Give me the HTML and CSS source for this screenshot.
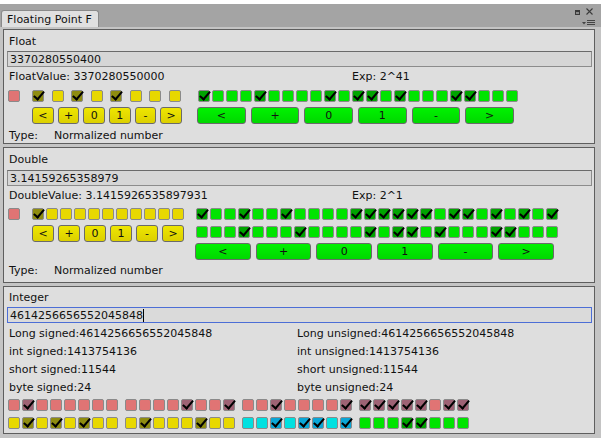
FILE: index.html
```html
<!DOCTYPE html>
<html>
<head>
<meta charset="utf-8">
<link rel="stylesheet" href="styles.css">
</head>
<body>
<div class="topstrip"></div>
<div class="tabbar">
  <div class="tab">Floating Point F</div>
  <svg class="winctl" width="26" height="23" viewBox="0 0 26 23">
    <rect x="2" y="6" width="5" height="5" fill="#3a3a3a"/>
    <rect x="3" y="8" width="3" height="2" fill="#8a8a8a"/>
    <path d="M13.5 4.5 L19.5 10.5 M19.5 4.5 L13.5 10.5" stroke="#3c3c3c" stroke-width="1.1" fill="none"/>
    <polygon points="9,18 13,18 11,20.5" fill="#444"/>
    <path d="M14 16.5 H22 M14 18.5 H22 M14 20.5 H22" stroke="#444" stroke-width="1" fill="none"/>
  </svg>
</div>
<div class="window">
  <section class="panel float">
    <div class="row lbl">Float</div>
    <div class="field">3370280550400</div>
    <div class="row val"><span class="vcol">FloatValue: 3370280550000</span><span>Exp: 2^41</span></div>
    <div class="bits">
      <div class="lcol lcol-f">
        <div class="brow">
          <span class="b r sign"></span>
          <div class="ybox spread">
            <span class="b y c"></span><span class="b y"></span><span class="b y c"></span><span class="b y"></span><span class="b y c"></span><span class="b y"></span><span class="b y"></span><span class="b y"></span>
          </div>
        </div>
        <div class="btns ybtns">
          <span class="btn yb">&lt;</span><span class="btn yb">+</span><span class="btn yb">0</span><span class="btn yb">1</span><span class="btn yb">-</span><span class="btn yb">&gt;</span>
        </div>
      </div>
      <div class="rcol rcol-f">
        <div class="brow grow">
          <span class="b g c"></span><span class="b g"></span><span class="b g"></span><span class="b g"></span><span class="b g c"></span><span class="b g"></span><span class="b g"></span><span class="b g"></span><span class="b g"></span><span class="b g c"></span><span class="b g"></span><span class="b g c"></span><span class="b g c"></span><span class="b g"></span><span class="b g c"></span><span class="b g"></span><span class="b g"></span><span class="b g"></span><span class="b g c"></span><span class="b g c"></span><span class="b g"></span><span class="b g"></span><span class="b g"></span>
        </div>
        <div class="btns gbtns">
          <span class="btn gb">&lt;</span><span class="btn gb">+</span><span class="btn gb">0</span><span class="btn gb">1</span><span class="btn gb">-</span><span class="btn gb">&gt;</span>
        </div>
      </div>
    </div>
    <div class="row type"><span class="tlabel">Type:</span><span>Normalized number</span></div>
  </section>

  <section class="panel double">
    <div class="row lbl">Double</div>
    <div class="field">3.14159265358979</div>
    <div class="row val"><span class="vcol">DoubleValue: 3.1415926535897931</span><span>Exp: 2^1</span></div>
    <div class="bits">
      <div class="lcol lcol-d">
        <div class="brow">
          <span class="b r sign"></span>
          <div class="ybox tight">
            <span class="b y c"></span><span class="b y"></span><span class="b y"></span><span class="b y"></span><span class="b y"></span><span class="b y"></span><span class="b y"></span><span class="b y"></span><span class="b y"></span><span class="b y"></span><span class="b y"></span>
          </div>
        </div>
        <div class="btns ybtns">
          <span class="btn yb">&lt;</span><span class="btn yb">+</span><span class="btn yb">0</span><span class="btn yb">1</span><span class="btn yb">-</span><span class="btn yb">&gt;</span>
        </div>
      </div>
      <div class="rcol rcol-d">
        <div class="brow grow">
          <span class="b g c"></span><span class="b g"></span><span class="b g"></span><span class="b g c"></span><span class="b g"></span><span class="b g"></span><span class="b g c"></span><span class="b g"></span><span class="b g"></span><span class="b g"></span><span class="b g"></span><span class="b g c"></span><span class="b g c"></span><span class="b g c"></span><span class="b g c"></span><span class="b g c"></span><span class="b g c"></span><span class="b g"></span><span class="b g c"></span><span class="b g c"></span><span class="b g"></span><span class="b g c"></span><span class="b g"></span><span class="b g c"></span><span class="b g"></span><span class="b g c"></span>
        </div>
        <div class="brow grow grow2">
          <span class="b g"></span><span class="b g"></span><span class="b g"></span><span class="b g c"></span><span class="b g"></span><span class="b g"></span><span class="b g"></span><span class="b g c"></span><span class="b g"></span><span class="b g"></span><span class="b g"></span><span class="b g"></span><span class="b g c"></span><span class="b g"></span><span class="b g c"></span><span class="b g c"></span><span class="b g"></span><span class="b g c"></span><span class="b g"></span><span class="b g"></span><span class="b g"></span><span class="b g c"></span><span class="b g c"></span><span class="b g"></span><span class="b g"></span><span class="b g"></span>
        </div>
        <div class="btns gbtns gbtns-d">
          <span class="btn gb">&lt;</span><span class="btn gb">+</span><span class="btn gb">0</span><span class="btn gb">1</span><span class="btn gb">-</span><span class="btn gb">&gt;</span>
        </div>
      </div>
    </div>
    <div class="row type"><span class="tlabel">Type:</span><span>Normalized number</span></div>
  </section>

  <section class="panel integer">
    <div class="row lbl">Integer</div>
    <div class="field focus">4614256656552045848<span class="caret"></span></div>
    <div class="ints">
      <div class="row">Long signed:4614256656552045848</div>
      <div class="row">Long unsigned:4614256656552045848</div>
      <div class="row">int signed:1413754136</div>
      <div class="row">int unsigned:1413754136</div>
      <div class="row">short signed:11544</div>
      <div class="row">short unsigned:11544</div>
      <div class="row">byte signed:24</div>
      <div class="row">byte unsigned:24</div>
    </div>
    <div class="irow">
      <div class="grp"><span class="b r"></span><span class="b r c"></span><span class="b r"></span><span class="b r"></span><span class="b r"></span><span class="b r"></span><span class="b r"></span><span class="b r"></span></div>
      <div class="grp"><span class="b r"></span><span class="b r"></span><span class="b r"></span><span class="b r"></span><span class="b r c"></span><span class="b r"></span><span class="b r"></span><span class="b r c"></span></div>
      <div class="grp"><span class="b r"></span><span class="b r"></span><span class="b r c"></span><span class="b r"></span><span class="b r"></span><span class="b r"></span><span class="b r"></span><span class="b r c"></span></div>
      <div class="grp"><span class="b r c"></span><span class="b r c"></span><span class="b r c"></span><span class="b r c"></span><span class="b r c"></span><span class="b r"></span><span class="b r c"></span><span class="b r c"></span></div>
    </div>
    <div class="irow irow2">
      <div class="grp"><span class="b y"></span><span class="b y c"></span><span class="b y"></span><span class="b y c"></span><span class="b y"></span><span class="b y c"></span><span class="b y"></span><span class="b y"></span></div>
      <div class="grp"><span class="b y"></span><span class="b y c"></span><span class="b y"></span><span class="b y"></span><span class="b y"></span><span class="b y c"></span><span class="b y"></span><span class="b y"></span></div>
      <div class="grp"><span class="b cy"></span><span class="b cy"></span><span class="b cy c"></span><span class="b cy"></span><span class="b cy c"></span><span class="b cy c"></span><span class="b cy"></span><span class="b cy c"></span></div>
      <div class="grp"><span class="b g"></span><span class="b g"></span><span class="b g"></span><span class="b g c"></span><span class="b g c"></span><span class="b g"></span><span class="b g"></span><span class="b g"></span></div>
    </div>
  </section>
</div>
</body>
</html>
```
FILE: styles.css
```css
* { box-sizing: border-box; }
html, body { margin: 0; padding: 0; }
body {
  width: 601px;
  height: 438px;
  overflow: hidden;
  background: #a4a4a4;
  font-family: "DejaVu Sans", "Noto Sans", sans-serif;
  font-size: 11px;
  color: #111111;
}
.topstrip { height: 4px; background: #ffffff; }
.tabbar {
  height: 23px;
  display: flex;
  align-items: flex-end;
  padding-left: 1px;
}
.tab {
  width: 98px;
  height: 17px;
  background: #e0e0e0;
  border: 1px solid #8a8a8a;
  border-bottom: none;
  border-radius: 3px 3px 0 0;
  padding: 1px 0 0 5px;
  line-height: 16px;
  white-space: nowrap;
}
.winctl { margin-left: auto; margin-right: 2px; align-self: flex-start; }

.window {
  height: 411px;
  background: #c4c4c4;
  padding: 2px 6px 0 3px;
  display: flex;
  flex-direction: column;
  gap: 3px;
}
.panel {
  background: #dedede;
  border: 1px solid #5e5e5e;
  padding: 2px 0 0 0;
}
.float { padding-bottom: 0; }
.double { padding-bottom: 4px; }
.integer { padding-top: 1px; padding-bottom: 4px; }

.row { height: 18px; line-height: 18px; padding: 1px 0 0 5px; white-space: nowrap; }
.field {
  height: 16px;
  margin: 1px 2px 0 3px;
  border: 1px solid #8c8c8c;
  border-top-color: #6a6a6a;
  background: #d6d6d6;
  line-height: 14px;
  padding: 1px 0 0 2px;
  white-space: nowrap;
}
.double .field { margin-top: 2px; }
.field.focus { border-color: #4c6ed6; background: #dadada; }
.caret { display: inline-block; width: 1px; height: 13px; background: #000; vertical-align: -3px; }

.val { display: flex; }
.vcol { width: 343px; }

.bits { display: flex; margin-top: 5px; padding-left: 4px; }
.double .bits { margin-top: 4px; }
.lcol { display: flex; flex-direction: column; }
.lcol-f { width: 174px; }
.lcol-d { width: 176px; }
.brow { display: flex; height: 12px; }
.sign { margin-right: 12px; }
.ybox { display: flex; flex: 1; }
.ybox.spread { justify-content: space-between; padding-right: 1px; }
.ybox.tight { gap: 2px; }
.rcol { display: flex; flex-direction: column; }
.rcol-f { margin-left: 15px; width: 317px; }
.rcol-d { margin-left: 11px; width: 359px; }
.grow { gap: 2px; padding-left: 1px; }
.grow2 { margin-top: 6px; }

.btns { display: flex; height: 17px; margin-top: 5px; }
.ybtns { margin-left: 24px; gap: 4px; }
.gbtns { gap: 5px; }
.btn {
  flex: 1;
  border: 1px solid #6a6a6a;
  border-radius: 3px;
  text-align: center;
  line-height: 15px;
  color: #111;
}
.yb { background: linear-gradient(#eee600, #dcd000); }
.gb { background: linear-gradient(#00f200, #00d800); }

.type { height: 16px; line-height: 16px; margin-top: 3px; display: flex; }
.double .type { margin-top: 2px; }
.tlabel { width: 45px; }

.b {
  position: relative;
  display: block;
  width: 12px;
  height: 12px;
  flex: none;
  border: 1px solid #8a8a8a;
  border-radius: 2px;
}
.b.c::after {
  content: "";
  position: absolute;
  left: 3px;
  top: -2px;
  width: 4px;
  height: 9px;
  border-right: 2.5px solid #000;
  border-bottom: 2.5px solid #000;
  transform: rotate(40deg);
}
.r { background: #e07474; }
.r.c { background: #9e6274; }
.y { background: #e8d800; }
.y.c { background: #8e8c10; }
.g { background: #00e400; }
.g.c { background: #00a400; }
.cy { background: #00e0e0; }
.cy.c { background: #0aa6d6; }

.ints {
  display: grid;
  grid-template-columns: 288px 288px;
  margin-top: 1px;
}
.irow { display: flex; gap: 7px; padding-left: 4px; margin-top: 3px; height: 12px; }
.irow2 { margin-top: 6px; }
.grp { display: flex; gap: 2px; }
```
